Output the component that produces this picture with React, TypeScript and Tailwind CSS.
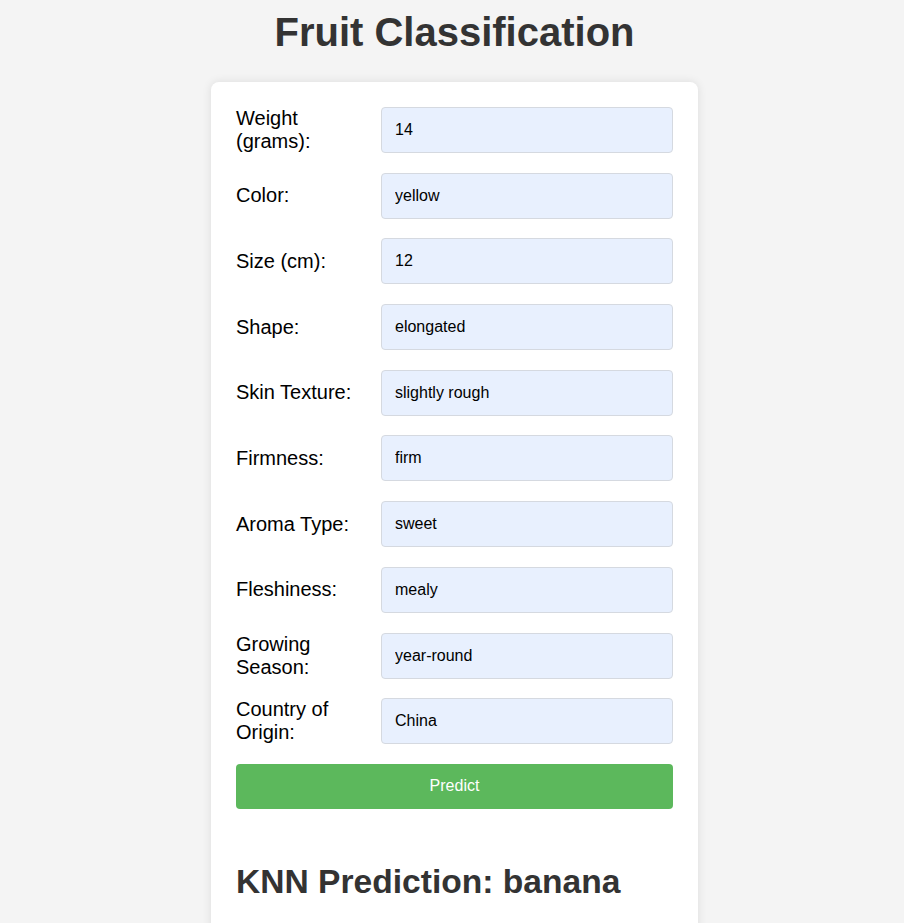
import React from 'react';

const fields: { label: string; value: string }[] = [
  { label: 'Weight (grams):', value: '14' },
  { label: 'Color:', value: 'yellow' },
  { label: 'Size (cm):', value: '12' },
  { label: 'Shape:', value: 'elongated' },
  { label: 'Skin Texture:', value: 'slightly rough' },
  { label: 'Firmness:', value: 'firm' },
  { label: 'Aroma Type:', value: 'sweet' },
  { label: 'Fleshiness:', value: 'mealy' },
  { label: 'Growing Season:', value: 'year-round' },
  { label: 'Country of Origin:', value: 'China' },
];

const App: React.FC = () => {
  return (
    <div className="min-h-[923px] bg-[#f4f4f4] pl-[5px] font-['Liberation_Sans',Arial,sans-serif]">
      <h1 className="pt-[9px] text-center text-[40px] font-bold leading-[46px] text-[#333]">Fruit Classification</h1>

      <div className="mx-auto mt-[27px] w-[487px] rounded-lg bg-white p-[25px] shadow-[0_0_10px_rgba(0,0,0,0.1)]">
        <form className="flex flex-col gap-y-[19.7px]" onSubmit={(e) => e.preventDefault()}>
          {fields.map((f) => (
            <div key={f.label} className="flex items-center">
              <label className="w-[145px] shrink-0 pr-[12px] text-[20px] leading-[23px] text-black">{f.label}</label>
              <input
                readOnly
                value={f.value}
                className="h-[46px] flex-1 rounded border border-[#d5d9e0] bg-[#e8f0fe] px-[13px] text-[16px] text-black outline-none"
              />
            </div>
          ))}
          <button
            type="submit"
            className="h-[45px] w-full rounded bg-[#5cb85c] text-[16px] text-white"
          >
            Predict
          </button>
        </form>

        {/* result */}
        <h2 className="mt-[53px] pb-[20px] text-[33.6px] font-bold leading-[39px] text-[#333]">KNN Prediction: banana</h2>
      </div>
    </div>
  );
};

export default App;
